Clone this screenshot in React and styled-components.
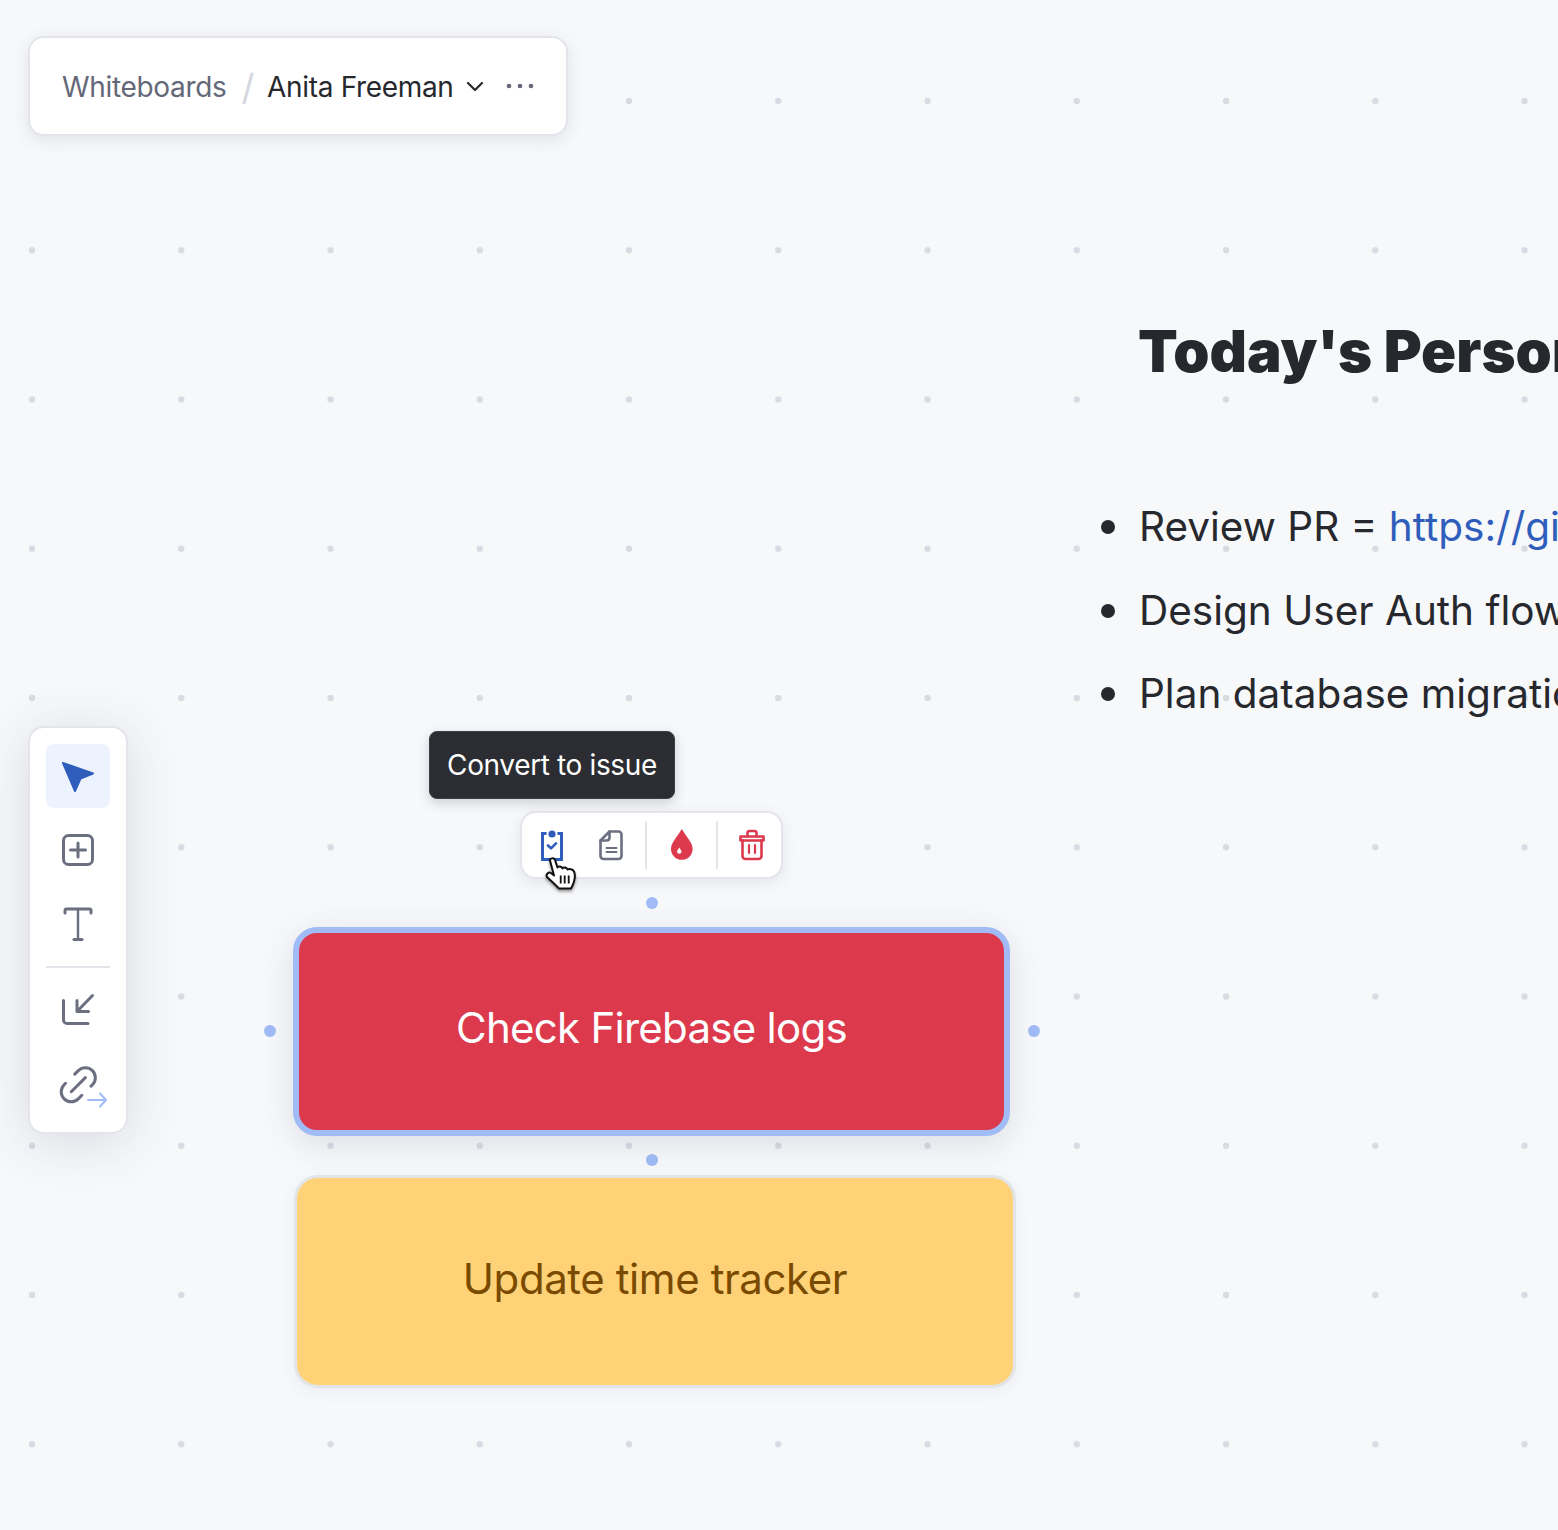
import React from "react";
import styled, { createGlobalStyle } from "styled-components";

const Global = createGlobalStyle`
  html, body { margin: 0; padding: 0; background: #f7f8fa; }
  * { box-sizing: border-box; }
`;

const Canvas = styled.div`
  position: relative;
  width: 1558px;
  height: 1530px;
  overflow: hidden;
  font-family: Inter, "Noto Sans", sans-serif;
  background-color: #f7f8fa;
  background-image: radial-gradient(circle at center, #d9dbe3 0, #d9dbe3 3px, transparent 3.6px);
  background-size: 149.25px 149.25px;
  background-position: -42.6px 26.4px;
`;

const Breadcrumb = styled.nav`
  position: absolute;
  left: 28px;
  top: 36px;
  width: 540px;
  height: 100px;
  display: flex;
  align-items: center;
  padding: 0 32px;
  background: #fff;
  border: 2px solid #e3e5ea;
  border-radius: 16px;
  box-shadow: 0 4px 16px rgba(60, 70, 100, 0.12);
  font-size: 28px;
  line-height: 34px;
  letter-spacing: -0.33px;
`;
const Crumb = styled.span`
  padding-top: 2px;
  color: ${(p) => (p.$current ? "#26282e" : "#646878")};
  white-space: nowrap;
`;
const Slash = styled.span`
  color: #d5d7df;
  font-size: 36px;
  margin: 2px 13px 0 15px;
`;
const MenuIcon = styled.svg`
  flex: none;
  display: block;
  margin-left: ${(p) => p.$gap}px;
`;

const Toolbar = styled.aside`
  position: absolute;
  left: 28px;
  top: 726px;
  width: 100px;
  height: 408px;
  display: flex;
  flex-direction: column;
  gap: 10px;
  padding: 16px;
  background: #fff;
  border: 2px solid #e3e5ea;
  border-radius: 16px;
  box-shadow: 0 8px 52px rgba(60, 70, 100, 0.16);
`;
const ToolButton = styled.button`
  width: 64px;
  height: 64px;
  padding: 0;
  border: 0;
  flex: none;
  border-radius: 8px;
  background: ${(p) => (p.$active ? "#edf2ff" : "transparent")};
  svg { display: block; overflow: visible; }
`;
const ToolDivider = styled.div`
  height: 2px;
  flex: none;
  background: #e3e5ea;
`;

const Tooltip = styled.div`
  position: absolute;
  left: 429px;
  top: 731px;
  width: 246px;
  height: 68px;
  display: flex;
  align-items: center;
  justify-content: center;
  background: #2b2d33;
  border: 1px solid #3d3f46;
  border-radius: 8px;
  color: #fff;
  font-size: 28px;
  letter-spacing: -0.37px;
  box-shadow: 0 4px 12px rgba(40, 44, 60, 0.2);
  white-space: nowrap;
`;

const ActionBar = styled.div`
  position: absolute;
  left: 520px;
  top: 811px;
  height: 68px;
  display: flex;
  align-items: center;
  gap: 10.4px;
  padding: 0 5.3px 0 6px;
  background: #fff;
  border: 2px solid #e3e5ea;
  border-radius: 16px;
  box-shadow: 0 4px 14px rgba(60, 70, 100, 0.1);
`;
const ActionButton = styled.button`
  width: 48px;
  height: 60px;
  padding: 0;
  border: 0;
  background: transparent;
  flex: none;
  svg { display: block; }
`;
const ActionDivider = styled.div`
  width: 2px;
  height: 48px;
  flex: none;
  background: #e3e5ea;
`;
const HandCursor = styled.svg`
  position: absolute;
  left: 545px;
  top: 856px;
  filter: drop-shadow(0 2px 1.5px rgba(0, 0, 0, 0.4));
`;

const Handle = styled.span`
  position: absolute;
  left: ${(p) => p.$x - 6}px;
  top: ${(p) => p.$y - 6}px;
  width: 12px;
  height: 12px;
  border-radius: 50%;
  background: #a0bbf5;
`;

const Node = styled.div`
  position: absolute;
  left: ${(p) => p.$x}px;
  top: ${(p) => p.$y}px;
  width: ${(p) => p.$w}px;
  height: ${(p) => p.$h}px;
  display: flex;
  align-items: center;
  justify-content: center;
  border-radius: 24px;
  font-size: 42px;
  line-height: 50px;
  white-space: nowrap;
`;
const RedNode = styled(Node)`
  padding-bottom: 8px;
  letter-spacing: -0.74px;
  background: #dc3a4c;
  border: 6px solid #a0bbf5;
  color: #fff;
  box-shadow: 0 8px 32px rgba(60, 70, 100, 0.14);
`;
const YellowNode = styled(Node)`
  padding-bottom: 6px;
  letter-spacing: -0.42px;
  background: #ffd278;
  border: 3px solid #e3e4e6;
  color: #7a4a00;
  box-shadow: 0 4px 16px rgba(60, 70, 100, 0.06);
`;

const Note = styled.section`
  position: absolute;
  left: 1101px;
  top: 315px;
  width: 900px;
  color: #26282e;
`;
const Heading = styled.h1`
  margin: 0 0 116px 37px;
  font-size: 58px;
  line-height: 72px;
  font-weight: 900;
  white-space: nowrap;
`;
const List = styled.ul`
  list-style: none;
  margin: 0;
  padding: 0;
  display: flex;
  flex-direction: column;
  gap: 35.5px;
`;
const Item = styled.li`
  display: flex;
  align-items: center;
  gap: 24px;
  font-size: 40.5px;
  line-height: 48px;
  white-space: nowrap;
`;
const Bullet = styled.span`
  width: 14px;
  height: 14px;
  flex: none;
  border-radius: 50%;
  background: #26282e;
`;
const LinkText = styled.a`
  color: #2f5dbb;
  text-decoration: none;
`;

const gray = "#6b6f80";
const red = "#dc3a4c";
const blue = "#2f5dbb";

export default function App() {
  return (
    <Canvas>
      <Global />

      <Breadcrumb>
        <Crumb>Whiteboards</Crumb>
        <Slash>/</Slash>
        <Crumb $current>Anita Freeman</Crumb>
        <MenuIcon $gap={11} width="20" height="20" viewBox="0 0 20 20" fill="none" stroke="#26282e" strokeWidth="2.2" strokeLinecap="round" strokeLinejoin="round">
          <path d="M3 7l7 7 7-7" />
        </MenuIcon>
        <MenuIcon $gap={21} width="28" height="8" viewBox="0 0 28 8" fill="#646878">
          <circle cx="3" cy="4" r="2.3" />
          <circle cx="14" cy="4" r="2.3" />
          <circle cx="25" cy="4" r="2.3" />
        </MenuIcon>
      </Breadcrumb>

      <Toolbar>
        <ToolButton $active>
          <svg width="64" height="64" viewBox="0 0 64 64">
            <path d="M17 19L47 29.5 34.5 34.5 29 47Z" fill={blue} stroke={blue} strokeWidth="2" strokeLinejoin="round" />
          </svg>
        </ToolButton>
        <ToolButton>
          <svg width="64" height="64" viewBox="0 0 64 64" fill="none" stroke={gray} strokeWidth="3" strokeLinecap="round">
            <rect x="17.5" y="17.5" width="29" height="29" rx="5" />
            <path d="M32 25v14M24.5 32h15" />
          </svg>
        </ToolButton>
        <ToolButton>
          <svg width="64" height="64" viewBox="0 0 64 64" fill="none" stroke={gray} strokeLinecap="round" strokeLinejoin="round">
            <path d="M19 21v-2.5a1.5 1.5 0 0 1 1.5-1.5h23a1.5 1.5 0 0 1 1.5 1.5V21" strokeWidth="3" />
            <path d="M32 17v30" strokeWidth="2.4" />
            <path d="M28 47.5h8" strokeWidth="3" />
          </svg>
        </ToolButton>
        <ToolDivider />
        <ToolButton>
          <svg width="64" height="64" viewBox="0 0 64 64" fill="none" stroke={gray} strokeWidth="3" strokeLinecap="round" strokeLinejoin="round">
            <path d="M17.5 22.5V42a3.5 3.5 0 0 0 3.5 3.5h21" />
            <path d="M46.5 17.5L31 33.5M31 22.5v11h11.5" />
          </svg>
        </ToolButton>
        <ToolButton>
          <svg width="64" height="64" viewBox="0 0 64 64" fill="none" strokeLinecap="round" strokeLinejoin="round">
            <g transform="rotate(-45 33 32)" stroke={gray} strokeWidth="3">
              <path d="M37 22H42a10 10 0 0 1 0 20H40" />
              <path d="M27 42H22a10 10 0 0 1 0-20H24" />
              <path d="M22 32H42" />
            </g>
            <path d="M42 48H60M54 41.5L60 48l-6 6.5" stroke="#a0bbf5" strokeWidth="2" />
          </svg>
        </ToolButton>
      </Toolbar>

      <Tooltip>Convert to issue</Tooltip>

      <ActionBar>
        <ActionButton>
          <svg width="48" height="60" viewBox="0 -8 48 60" fill="none">
            <path d="M18.5 10.5H14.5V36.5H33.5V10.5H29.5" stroke={blue} strokeWidth="3" />
            <circle cx="24" cy="11" r="3.6" fill={blue} />
            <path d="M20 22.5l3 2.8 5-5" stroke={blue} strokeWidth="2.6" strokeLinecap="round" strokeLinejoin="round" />
          </svg>
        </ActionButton>
        <ActionButton>
          <svg width="48" height="60" viewBox="-1.5 -8 48 60" fill="none" stroke={gray} strokeWidth="2.6" strokeLinecap="round" strokeLinejoin="round">
            <path d="M22 8.5H31a3 3 0 0 1 3 3V33a3 3 0 0 1-3 3H16a3 3 0 0 1-3-3V17.5Z" />
            <path d="M22 8.5V15a3 3 0 0 1-3 2.5H13" />
            <path d="M19 25h10M19 29h10" strokeWidth="2" />
          </svg>
        </ActionButton>
        <ActionDivider />
        <ActionButton>
          <svg width="48" height="60" viewBox="-0.8 -8 48 60">
            <path d="M24 6C20 13 13.2 19.5 13.2 26a10.8 10.8 0 0 0 21.6 0C34.8 19.5 28 13 24 6Z" fill={red} />
            <path d="M21.5 24.5c-1 1.6-2.2 2.8-2.2 4a2.2 2.2 0 0 0 4.4 0c0-1.2-1.2-2.4-2.2-4Z" fill="#fff" />
          </svg>
        </ActionButton>
        <ActionDivider />
        <ActionButton>
          <svg width="48" height="60" viewBox="0 -8 48 60" fill="none" stroke={red} strokeWidth="2.6" strokeLinecap="round" strokeLinejoin="round">
            <path d="M12.5 13.5H35.5V17.5H12.5Z" />
            <path d="M19.5 13.5V10a2 2 0 0 1 2-2h5a2 2 0 0 1 2 2v3.5" />
            <path d="M14.5 17.5V33a3 3 0 0 0 3 3h13a3 3 0 0 0 3-3V17.5" />
            <path d="M21 22v8M27 22v8" strokeWidth="2.2" />
          </svg>
        </ActionButton>
      </ActionBar>

      <Handle $x={652} $y={903} />
      <Handle $x={270} $y={1031} />
      <Handle $x={1034} $y={1031} />
      <Handle $x={652} $y={1160} />

      <RedNode $x={293} $y={927} $w={717} $h={209}>Check Firebase logs</RedNode>
      <YellowNode $x={294} $y={1175} $w={722} $h={213}>Update time tracker</YellowNode>

      <HandCursor width="32" height="35" viewBox="0 0 32 34">
        <path d="M5 4C5 1.5 9 1 10 3.5L12.5 11C13.5 9.5 16.5 9.5 17.5 12C18.5 10.5 21.5 10.5 22.5 13C24 12 28 12.5 29 15C30.5 18 30 24 27.5 29L26 32H14L10 28L2 20.5C.5 18 3.5 15 6 16.5L9 19Z" fill="#fff" stroke="#111" strokeWidth="2" strokeLinejoin="round" />
        <path d="M15.7 19v8M19.7 19v8M23.7 19v8" stroke="#111" strokeWidth="1.8" />
      </HandCursor>

      <Note>
        <Heading>Today's Personal Tasks</Heading>
        <List>
          <Item><Bullet /><span>Review PR = <LinkText>https://github.com/plane</LinkText></span></Item>
          <Item><Bullet /><span>Design User Auth flow</span></Item>
          <Item><Bullet /><span>Plan database migration</span></Item>
        </List>
      </Note>
    </Canvas>
  );
}
